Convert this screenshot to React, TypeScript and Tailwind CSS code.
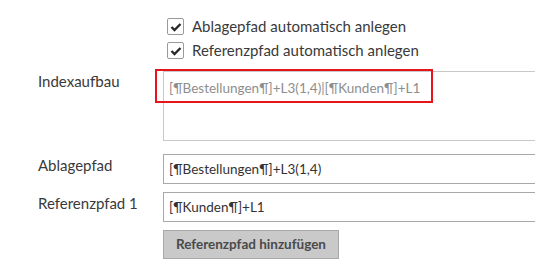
import React from "react";

function Check() {
  return (
    <span className="flex h-[17px] w-[17px] shrink-0 items-center justify-center rounded-[2px] border border-[#9a9a9a] bg-white">
      <svg width="12" height="10" viewBox="0 0 12 10">
        <path d="M1.5 5 L4.5 8 L10.5 2" fill="none" stroke="#2a2a2a" strokeWidth="2.4" />
      </svg>
    </span>
  );
}

export default function App() {
  return (
    <div
      className="relative h-[261px] w-[535px] overflow-hidden bg-white text-[15px] text-[#3a3a3a]"
      style={{ fontFamily: "Lato, 'Open Sans', sans-serif" }}
    >
      <div className="flex flex-col pt-[18px]">
        <div className="ml-[167px] flex flex-col gap-[7px]">
          <div className="flex h-[17px] items-center gap-[8px]">
            <Check />
            <span>Ablagepfad automatisch anlegen</span>
          </div>
          <div className="flex h-[17px] items-center gap-[8px]">
            <Check />
            <span>Referenzpfad automatisch anlegen</span>
          </div>
        </div>

        <div className="mt-[12px] flex">
          <div className="w-[163px] shrink-0 pl-[38px] leading-[20px]">Indexaufbau</div>
          <div className="h-[70px] w-[400px] shrink-0 border border-[#c8c8c8] px-[5px] pt-[6px] text-[13.5px] leading-[20px] text-[#8e8e8e]">
            [¶Bestellungen¶]+L3(1,4)|[¶Kunden¶]+L1
          </div>
        </div>

        <div className="mt-[13px] flex">
          <div className="w-[163px] shrink-0 pl-[38px] pt-[1px] leading-[20px]">Ablagepfad</div>
          <div className="flex h-[30px] w-[400px] shrink-0 items-center border border-[#a8a8a8] px-[5px] text-[13.5px] text-[#333]">
            [¶Bestellungen¶]+L3(1,4)
          </div>
        </div>

        <div className="mt-[8px] flex">
          <div className="w-[163px] shrink-0 pl-[38px] pt-[1px] leading-[20px]">Referenzpfad 1</div>
          <div className="flex h-[30px] w-[400px] shrink-0 items-center border border-[#a8a8a8] px-[5px] text-[13.5px] text-[#333]">
            [¶Kunden¶]+L1
          </div>
        </div>

        <div className="mt-[8px] flex pl-[163px]">
          <button className="flex h-[29px] w-[176px] items-center justify-center border border-[#a8a8a8] bg-[#c9c9c9] text-[13.5px] font-bold text-[#4a4a4a]">
            Referenzpfad hinzufügen
          </button>
        </div>
      </div>

      <div className="absolute left-[155px] top-[69px] h-[34px] w-[278px] border-2 border-[#e8141c]" />
    </div>
  );
}
